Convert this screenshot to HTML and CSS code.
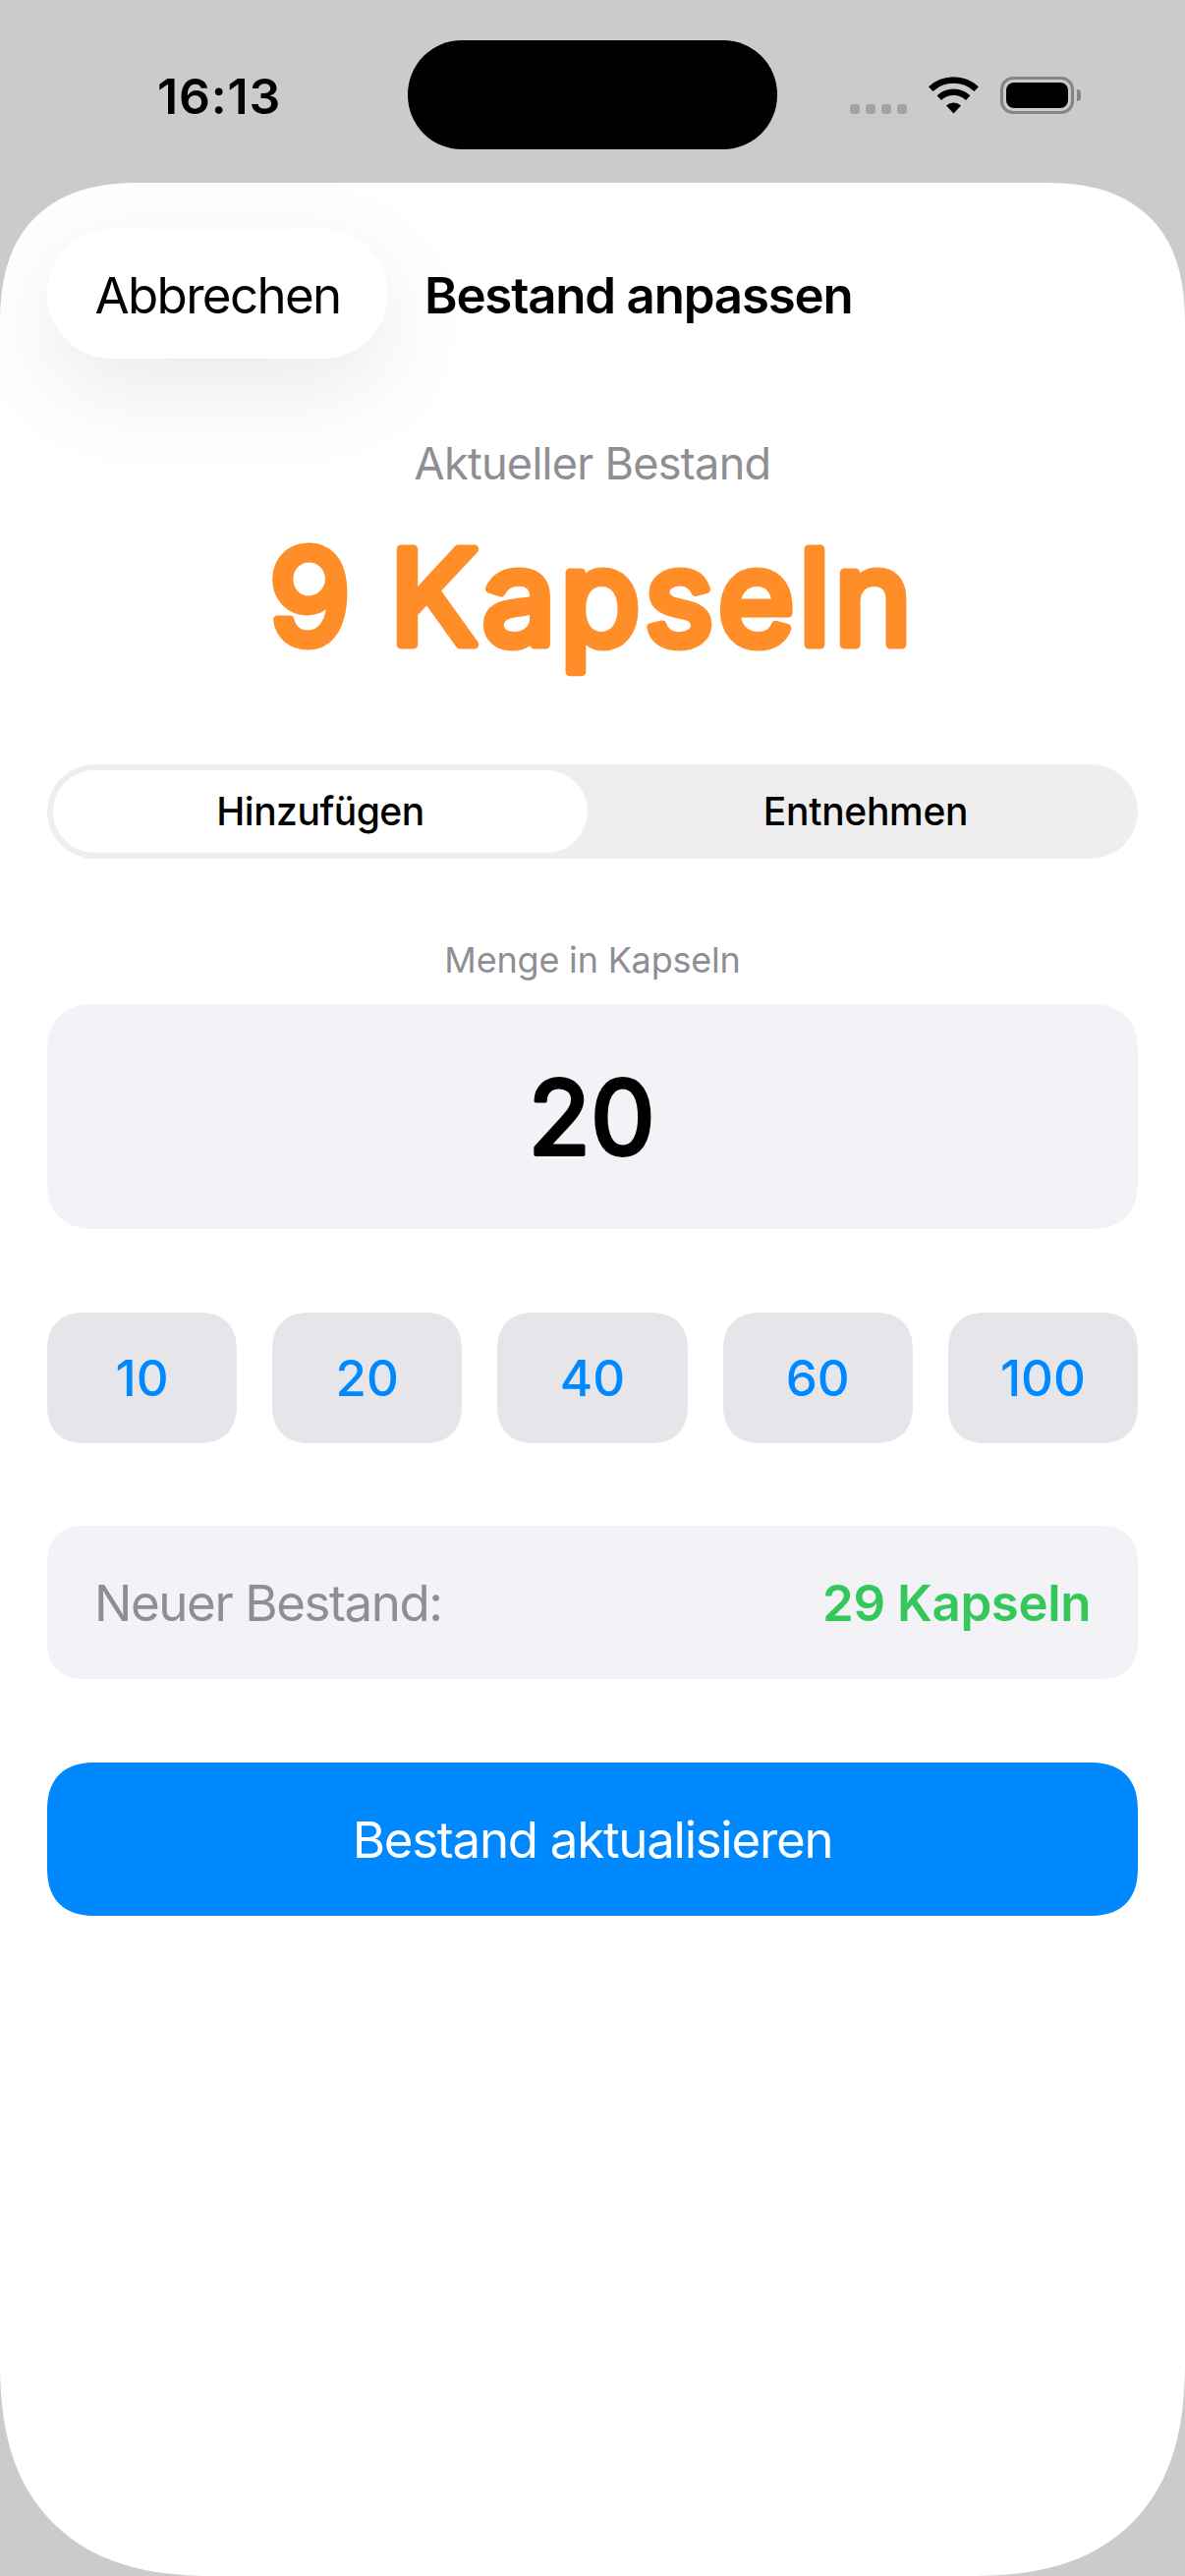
FILE: index.html
```html
<!DOCTYPE html>
<html lang="de">
<head>
    <title>Bestand anpassen</title>
    <link rel="stylesheet" href="styles.css">
</head>
<body>
    <div class="status-bar">
        <div class="time">16:13</div>
        <div class="island"></div>
        <div class="signal">
            <span></span><span></span><span></span><span></span>
        </div>
        <svg class="wifi" width="51" height="38" viewBox="0 0 51 38">
            <path d="M2.3 12.6A34 34 0 0 1 48.7 12.6" fill="none" stroke="#000" stroke-width="6.5"/>
            <path d="M10.8 21.6A21.5 21.5 0 0 1 40.2 21.6" fill="none" stroke="#000" stroke-width="6.5"/>
            <path d="M25.5 37.5L18 29.5A11 11 0 0 1 33 29.5Z" fill="#000"/>
        </svg>
        <div class="battery">
            <div class="battery-body"><div class="battery-fill"></div></div>
            <div class="battery-cap"></div>
        </div>
    </div>

    <div class="sheet">
        <div class="header">
            <div class="cancel">Abbrechen</div>
            <div class="title">Bestand anpassen</div>
        </div>

        <div class="current-label">Aktueller Bestand</div>
        <svg class="current-value" width="1110" height="170" viewBox="0 0 1110 170">
            <text x="555" y="134" text-anchor="middle">9 Kapseln</text>
        </svg>

        <div class="segment">
            <div class="segment-item active">Hinzufügen</div>
            <div class="segment-item">Entnehmen</div>
        </div>

        <div class="amount-label">Menge in Kapseln</div>
        <div class="amount-field">
            <svg class="amount-value" width="300" height="229" viewBox="0 0 300 229">
                <text x="149" y="153" text-anchor="middle">20</text>
            </svg>
        </div>

        <div class="chips">
            <div class="chip">10</div>
            <div class="chip">20</div>
            <div class="chip">40</div>
            <div class="chip">60</div>
            <div class="chip">100</div>
        </div>

        <div class="summary">
            <span class="summary-label">Neuer Bestand:</span>
            <span class="summary-value">29 Kapseln</span>
        </div>

        <div class="submit">Bestand aktualisieren</div>
    </div>
</body>
</html>
```

FILE: styles.css
```css
html, body {
    margin: 0;
    padding: 0;
}
body {
    width: 1206px;
    height: 2622px;
    overflow: hidden;
    background-color: #cbcbcb;
    font-family: Inter, "Noto Sans", sans-serif;
    color: #000;
}

/* continuous corners like on iOS */
.sheet, .amount-field, .chip, .summary, .submit {
    corner-shape: superellipse(1.3);
}

/* status bar */
.status-bar {
    height: 186px;
    box-sizing: border-box;
    padding: 41px 0 0 160px;
    display: flex;
    align-items: flex-start;
}
.time {
    width: 255px;
    margin-top: 30px;
    font-size: 50px;
    line-height: 54px;
    font-weight: 600;
    letter-spacing: 0.8px;
}
.island {
    width: 376px;
    height: 111px;
    border-radius: 55px;
    background-color: #000;
}
.signal {
    margin: 65px 0 0 74px;
    display: flex;
    gap: 6px;
}
.signal span {
    width: 10px;
    height: 10px;
    border-radius: 3px;
    background-color: #a3a3a3;
}
.wifi {
    margin: 37px 0 0 22px;
}
.battery {
    margin: 37px 0 0 22px;
    display: flex;
    align-items: center;
    gap: 3px;
}
.battery-body {
    width: 75px;
    height: 38px;
    box-sizing: border-box;
    border: 3px solid #858585;
    border-radius: 13px;
    padding: 3px;
}
.battery-fill {
    height: 100%;
    border-radius: 8px;
    background-color: #000;
}
.battery-cap {
    width: 4px;
    height: 12px;
    border-radius: 0 4px 4px 0;
    background-color: #858585;
}

/* sheet */
.sheet {
    height: 2436px;
    box-sizing: border-box;
    padding: 47px 48px 0;
    background-color: #fff;
    border-radius: 145px 145px 220px 220px;
    overflow: hidden;
}
.header {
    display: flex;
    align-items: center;
    gap: 37px;
}
.cancel {
    width: 347px;
    height: 132px;
    box-sizing: border-box;
    padding-top: 2px;
    border-radius: 66px;
    background-color: #fff;
    box-shadow: 0 30px 100px rgba(0, 0, 0, 0.09);
    display: flex;
    align-items: center;
    justify-content: center;
    font-size: 51px;
    letter-spacing: -1.65px;
}
.title {
    padding-top: 2px;
    font-size: 51px;
    font-weight: 600;
    letter-spacing: -1.2px;
}

.current-label {
    margin-top: 80px;
    font-size: 45px;
    line-height: 54px;
    letter-spacing: -0.7px;
    color: #8e8e93;
    text-align: center;
}
/* rounded look: the stroke on the svg text softens the letter ends */
.current-value {
    display: block;
    margin-top: 23px;
}
.current-value text {
    font-size: 134px;
    font-weight: 400;
    letter-spacing: 4px;
    word-spacing: -6px;
    fill: #ff8d28;
    stroke: #ff8d28;
    stroke-width: 9px;
    stroke-linejoin: round;
}

.segment {
    margin-top: 86px;
    height: 96px;
    box-sizing: border-box;
    padding: 6px;
    border-radius: 48px;
    background-color: #eeeeef;
    display: flex;
}
.segment-item {
    flex: 1;
    padding: 0 0 2px 12px;
    display: flex;
    align-items: center;
    justify-content: center;
    font-size: 39px;
    font-weight: 450;
    letter-spacing: -0.3px;
}
.segment-item.active {
    flex: 0 0 544px;
    padding-left: 0;
    border-radius: 42px;
    background-color: #fff;
    font-weight: 550;
    letter-spacing: -0.5px;
}

.amount-label {
    margin-top: 81px;
    font-size: 36px;
    line-height: 44px;
    letter-spacing: -0.2px;
    color: #8e8e93;
    text-align: center;
}
.amount-field {
    margin-top: 23px;
    height: 229px;
    border-radius: 50px;
    background-color: #f2f2f7;
    display: flex;
    align-items: center;
    justify-content: center;
}
.amount-value text {
    font-size: 104px;
    font-weight: 400;
    fill: #000;
    stroke: #000;
    stroke-width: 4px;
    stroke-linejoin: round;
}

.chips {
    margin-top: 85px;
    display: grid;
    grid-template-columns: repeat(5, 1fr);
    gap: 36px;
}
.chip {
    height: 133px;
    border-radius: 40px;
    background-color: #e5e5ea;
    display: flex;
    align-items: center;
    justify-content: center;
    font-size: 51px;
    font-weight: 450;
    color: #0088ff;
}

.summary {
    margin-top: 84px;
    height: 156px;
    box-sizing: border-box;
    padding: 0 48px;
    border-radius: 40px;
    background-color: #f2f2f7;
    display: flex;
    align-items: center;
    justify-content: space-between;
    font-size: 51px;
}
.summary-label {
    letter-spacing: -1.4px;
    color: #8e8e93;
}
.summary-value {
    font-weight: 600;
    letter-spacing: -0.4px;
    color: #34c759;
}

.submit {
    margin-top: 85px;
    height: 156px;
    border-radius: 50px;
    background-color: #0088ff;
    display: flex;
    align-items: center;
    justify-content: center;
    font-size: 51px;
    letter-spacing: -1.27px;
    color: #fff;
}
```
